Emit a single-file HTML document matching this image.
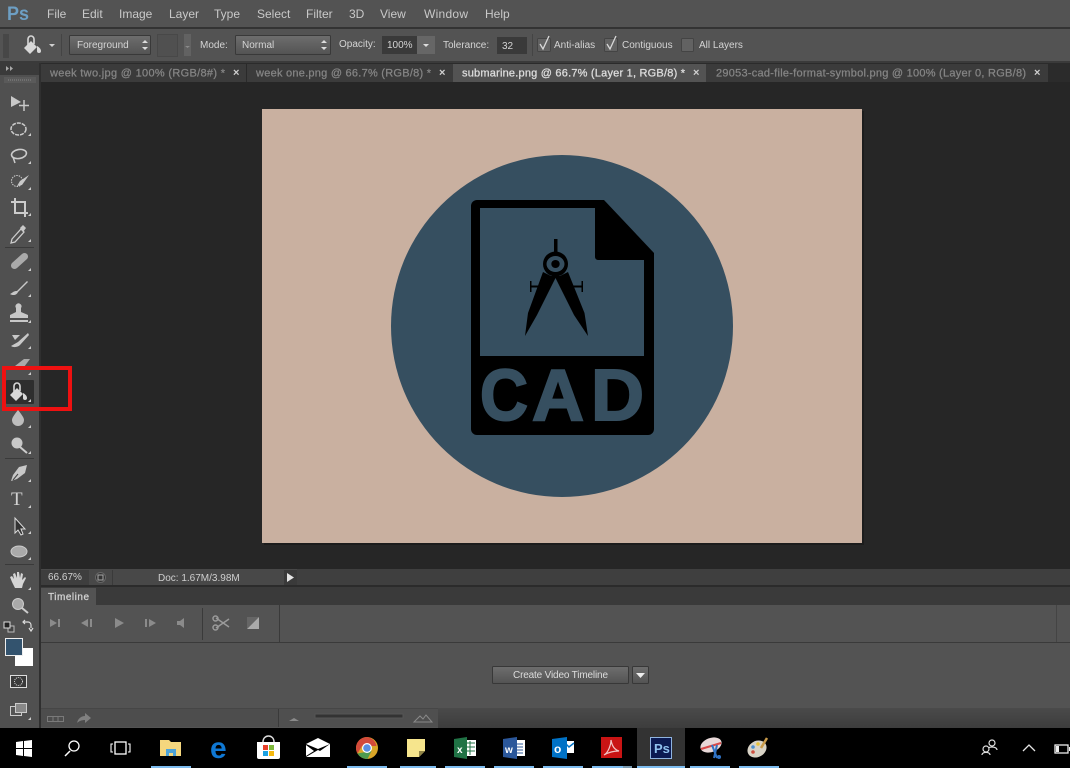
<!DOCTYPE html>
<html><head><meta charset="utf-8"><style>
html,body{margin:0;padding:0;background:#000;width:1070px;height:768px;overflow:hidden}
svg{display:block;font-family:"Liberation Sans",sans-serif}
.m{font-size:12px;fill:#c9c9c9}
.o{font-size:10px;fill:#d4d4d4}
.t{font-size:11px;fill:#858585;stroke:#858585;stroke-width:.25px}
.x{font-size:11px;fill:#d0d0d0;font-weight:bold}
.i{fill:#c8c8c8}
.c{fill:#8b8b8b}
</style></head><body>
<svg width="1070" height="768" viewBox="0 0 1070 768" xmlns="http://www.w3.org/2000/svg">
<defs>
<linearGradient id="dd" x1="0" y1="0" x2="0" y2="1"><stop offset="0" stop-color="#6e6e6e"/><stop offset="1" stop-color="#535353"/></linearGradient>
<linearGradient id="bot" x1="0" y1="0" x2="0" y2="1"><stop offset="0" stop-color="#4a4a4a"/><stop offset="1" stop-color="#3d3d3d"/></linearGradient>
</defs>
<!-- base -->
<rect width="1070" height="768" fill="#535353"/>
<rect x="0" y="27" width="1070" height="2" fill="#333"/>
<rect x="0" y="61" width="1070" height="2" fill="#3a3a3a"/>
<!-- menu -->
<text x="7" y="20" font-size="19" font-weight="bold" fill="#6d9fc4" textLength="22" lengthAdjust="spacingAndGlyphs">Ps</text>
<text class="m" x="47" y="18">File</text>
<text class="m" x="82" y="18">Edit</text>
<text class="m" x="119" y="18">Image</text>
<text class="m" x="169" y="18">Layer</text>
<text class="m" x="214" y="18">Type</text>
<text class="m" x="257" y="18">Select</text>
<text class="m" x="306" y="18">Filter</text>
<text class="m" x="349" y="18">3D</text>
<text class="m" x="380" y="18">View</text>
<text class="m" x="424" y="18" textLength="44">Window</text>
<text class="m" x="485" y="18">Help</text>
<!-- options -->
<path d="M3 34h6v24H3z" fill="#474747"/>
<path d="M31 41L24 48 30 54 37 47z" fill="#d8d8d8"/>
<path d="M28 45V39a3 3 0 0 1 6 0V44" fill="none" stroke="#d8d8d8" stroke-width="1.600"/>
<path d="M37 46c2 1 4 3 4 5a2 2 0 0 1-4 0z" fill="#d8d8d8"/>
<path d="M49 44h6l-3 3z" fill="#d0d0d0"/>
<rect x="61" y="34" width="1" height="22" fill="#444"/>
<rect x="69.500" y="35.500" width="81" height="19" rx="1" fill="url(#dd)" stroke="#393939"/>
<text class="o" x="77" y="48">Foreground</text>
<path d="M142 43l3-3 3 3zM142 47l3 3 3-3z" fill="#ddd"/>
<rect x="157.500" y="34.500" width="20" height="22" fill="#505050" stroke="#484848"/>
<rect x="184" y="34" width="7" height="22" fill="#626262"/>
<path d="M185 46h5l-2.500 2z" fill="#8a8a8a"/>
<text class="o" x="200" y="48">Mode:</text>
<rect x="235.500" y="35.500" width="95" height="19" rx="1" fill="url(#dd)" stroke="#393939"/>
<text class="o" x="242" y="48">Normal</text>
<path d="M321 43l3-3 3 3zM321 47l3 3 3-3z" fill="#ddd"/>
<text class="o" x="339" y="47">Opacity:</text>
<rect x="382" y="36" width="35" height="18" fill="#3a3a3a"/>
<text class="o" x="387" y="48">100%</text>
<rect x="417" y="36" width="18" height="18" fill="#666"/>
<path d="M423 44h6l-3 3z" fill="#ddd"/>
<text class="o" x="443" y="48">Tolerance:</text>
<rect x="497" y="37" width="30" height="17" fill="#3a3a3a"/>
<text class="o" x="502" y="49">32</text>
<rect x="532" y="34" width="1" height="22" fill="#444"/>
<rect x="537.500" y="38.500" width="13" height="13" rx="1" fill="#626262" stroke="#444"/>
<path d="M540 44l3 5 6-13" fill="none" stroke="#d8d8d8" stroke-width="1.300"/>
<text class="o" x="554" y="48">Anti-alias</text>
<rect x="604.500" y="38.500" width="13" height="13" rx="1" fill="#626262" stroke="#444"/>
<path d="M607 44l3 5 6-13" fill="none" stroke="#d8d8d8" stroke-width="1.300"/>
<text class="o" x="622" y="48">Contiguous</text>
<rect x="681.500" y="38.500" width="12" height="13" rx="1" fill="#626262" stroke="#444"/>
<text class="o" x="699" y="48">All Layers</text>
<!-- document area -->
<rect x="40" y="63" width="1030" height="507" fill="#262626"/>
<!-- tabs -->
<rect x="40" y="63" width="1030" height="19" fill="#2b2b2b"/>
<rect x="40" y="64" width="1008" height="18" fill="#3b3b3b"/>
<text class="t" x="50" y="76.500" textLength="175">week two.jpg @ 100% (RGB/8#) *</text>
<text class="x" x="233" y="76">×</text>
<rect x="246" y="64" width="1" height="18" fill="#2a2a2a"/>
<text class="t" x="256" y="76.500" textLength="175">week one.png @ 66.7% (RGB/8) *</text>
<text class="x" x="439" y="76">×</text>
<rect x="453" y="64" width="253" height="18" fill="#535353"/>
<text x="462" y="76.500" font-size="11" fill="#dcdcdc" stroke="#dcdcdc" stroke-width=".3" textLength="223">submarine.png @ 66.7% (Layer 1, RGB/8) *</text>
<text class="x" x="693" y="76">×</text>
<text class="t" x="716" y="76.500" textLength="310">29053-cad-file-format-symbol.png @ 100% (Layer 0, RGB/8)</text>
<text class="x" x="1034" y="76">×</text>
<rect x="1048" y="64" width="22" height="18" fill="#2b2b2b"/>
<!-- canvas -->
<rect x="264" y="111" width="600" height="434" fill="#1c1c1c"/>
<rect x="262" y="109" width="600" height="434" fill="#c9b0a0"/>
<circle cx="562" cy="326" r="171" fill="#364f60"/>
<path d="M477 200H604L654 253V429a6 6 0 0 1-6 6H477a6 6 0 0 1-6-6V206a6 6 0 0 1 6-6z" fill="#000"/>
<path d="M480 208H595V257a3 3 0 0 0 3 3H644V356H480z" fill="#364f60"/>
<g font-size="72" font-weight="bold" fill="#364f60" stroke="#364f60" stroke-width="2">
<text x="480" y="420" textLength="48" lengthAdjust="spacingAndGlyphs">C</text>
<text x="532" y="420" textLength="52" lengthAdjust="spacingAndGlyphs">A</text>
<text x="591" y="420" textLength="53" lengthAdjust="spacingAndGlyphs">D</text>
</g>
<!-- compass -->
<rect x="554" y="239" width="3.500" height="17" fill="#000"/>
<ellipse cx="555.500" cy="264" rx="12.500" ry="12.500" fill="#000"/>
<ellipse cx="555.500" cy="264" rx="9" ry="8" fill="#364f60"/>
<ellipse cx="555.500" cy="264" rx="4.200" ry="4" fill="#000"/>
<path d="M543 272L528 313 525 336 537 315 555.500 278 574 315 588 336 584.500 313 568 272 560 276H551z" fill="#000"/>
<path d="M530 281v11h1.500v-4.500H540v-2h-8.500V281zM583 281v11h-1.500v-4.500H572v-2h9.500V281z" fill="#000"/>
<!-- toolbar -->
<rect x="0" y="63" width="39" height="665" fill="#505050"/>
<rect x="39" y="63" width="2" height="665" fill="#2f2f2f"/>
<rect x="0" y="63" width="39" height="12" fill="#3a3a3a"/>
<path d="M6 66l3 2.500-3 2.500zM10 66l3 2.500-3 2.500z" fill="#aaa"/>
<rect x="4" y="77" width="32" height="6" fill="#5a5a5a"/>
<path d="M8 80h24" stroke="#888" stroke-dasharray="1 1"/>
<rect x="5" y="247" width="29" height="1" fill="#3a3a3a"/>
<rect x="5" y="458" width="29" height="1" fill="#3a3a3a"/>
<!-- move -->
<path d="M11 96l10 6-10 5z" class="i"/>
<path d="M24 100v11M19 105.500h10" stroke="#c8c8c8" stroke-width="1.500" fill="none"/>
<!-- marquee -->
<ellipse cx="18.500" cy="129" rx="7.500" ry="6" fill="none" stroke="#ccc" stroke-width="1.500" stroke-dasharray="4 1"/>
<path d="M28 136h3v-3z" fill="#ccc"/>
<!-- lasso -->
<ellipse cx="19" cy="154" rx="7.500" ry="4.500" fill="none" stroke="#ccc" stroke-width="1.600" transform="rotate(-10 19 154)"/>
<path d="M13 157l2 6" stroke="#ccc" stroke-width="1.500"/>
<path d="M28 164h3v-3z" fill="#ccc"/>
<!-- quick select -->
<circle cx="17" cy="181" r="5.500" fill="none" stroke="#ccc" stroke-dasharray="1.500 1"/>
<path d="M29 175l-9 6-3 5 5-1z" class="i"/>
<path d="M28 190h3v-3z" fill="#ccc"/>
<!-- crop -->
<path d="M15 198v15h13M11 202h14v15" fill="none" stroke="#ccc" stroke-width="2"/>
<path d="M28 216h3v-3z" fill="#ccc"/>
<!-- eyedropper -->
<path d="M12 239l9-10 3 3-9 10-4 1z" fill="none" stroke="#ccc" stroke-width="1.300"/>
<path d="M20 228l3-3 3 3-3 4z" class="i"/>
<path d="M28 242h3v-3z" fill="#ccc"/>
<!-- healing -->
<path d="M12 263l10-9a3 3 0 0 1 5 5l-10 9a3 3 0 0 1-5-5z" fill="#aaa"/>
<path d="M28 271h3v-3z" fill="#ccc"/>
<!-- brush -->
<path d="M27 281l-10 10-1 0c-2 0-4 2-6 3 3 2 7 1 8-2l10-10z" class="i"/>
<path d="M28 297h3v-3z" fill="#ccc"/>
<!-- stamp -->
<path d="M16 308a3 3 0 1 1 5 0v4l7 3v3H10v-3l6-3zM10 320h18v2H10z" class="i"/>
<path d="M28 323h3v-3z" fill="#ccc"/>
<!-- history brush -->
<path d="M28 333l-10 9-7 4c3 2 7 1 9-1l9-10zM12 335h8l-5 5" class="i"/>
<path d="M28 349h3v-3z" fill="#ccc"/>
<!-- eraser -->
<path d="M15 366l9-7h6l-6 8H14z" fill="#aaa"/>
<path d="M12 368h14v2H12z" class="i"/>
<path d="M28 375h3v-3z" fill="#ccc"/>
<!-- active bucket -->
<rect x="6" y="380" width="28" height="24" rx="1" fill="#2e2e2e"/>
<g transform="translate(-14 347)">
<path d="M31 41L24 48 30 54 37 47z" fill="#d8d8d8"/>
<path d="M28 45V39a3 3 0 0 1 6 0V44" fill="none" stroke="#d8d8d8" stroke-width="1.600"/>
<path d="M37 46c2 1 4 3 4 5a2 2 0 0 1-4 0z" fill="#d8d8d8"/>
</g>
<path d="M28 402h3v-3z" fill="#ccc"/>
<rect x="4" y="368" width="66" height="41" fill="none" stroke="#ee1111" stroke-width="4"/>
<!-- blur -->
<path d="M18 410c4 5 6 8 6 10a6 6 0 0 1-12 0c0-2 2-5 6-10z" fill="#bdbdbd"/>
<path d="M28 428h3v-3z" fill="#ccc"/>
<!-- dodge -->
<circle cx="17" cy="443" r="5.500" class="i"/>
<path d="M20 447l7 6" stroke="#ccc" stroke-width="2"/>
<path d="M28 454h3v-3z" fill="#ccc"/>
<!-- pen -->
<path d="M27 465l-8 2-6 8-2 6 6-2 8-6z" class="i"/>
<path d="M13 480l5-6" stroke="#444"/>
<path d="M28 482h3v-3z" fill="#ccc"/>
<!-- type -->
<text x="11" y="505" font-family="Liberation Serif,serif" font-size="19" fill="#d2d2d2">T</text>
<path d="M28 508h3v-3z" fill="#ccc"/>
<!-- path select -->
<path d="M15 518v15l3-3 3 5 2-1-2-5h4z" fill="#333" stroke="#ddd"/>
<path d="M28 534h3v-3z" fill="#ccc"/>
<!-- shape -->
<ellipse cx="19" cy="551.500" rx="8" ry="5.500" fill="#aaa" stroke="#ccc"/>
<path d="M28 560h3v-3z" fill="#ccc"/>
<rect x="5" y="564" width="29" height="1" fill="#3a3a3a"/>
<!-- hand -->
<path d="M12 582l-2-5 2-1 2 3-1-5 2-1 2 5v-6h2l1 6 1-5 2 1-1 6 3-3 1 1-3 6-1 4h-7z" fill="#d4d4d4"/>
<path d="M28 590h3v-3z" fill="#ccc"/>
<!-- zoom -->
<circle cx="18" cy="604" r="5.500" fill="#aaa" stroke="#ccc"/>
<path d="M22 608l6 5" stroke="#ccc" stroke-width="2"/>
<!-- default / switch -->
<rect x="8" y="626" width="6" height="6" fill="#444" stroke="#bbb"/>
<rect x="4" y="622" width="6" height="6" fill="#222" stroke="#ddd"/>
<path d="M24 622h4a3 3 0 0 1 3 3v3M29 628l2 3 2-3M25 620l-2 2 2 2" fill="none" stroke="#ddd" stroke-width="1.200"/>
<!-- colors -->
<rect x="15" y="648" width="18" height="18" fill="#fff"/>
<rect x="5.500" y="638.500" width="17" height="17" fill="#33536e" stroke="#eee"/>
<!-- quick mask -->
<rect x="10.500" y="675.500" width="16" height="12" fill="#3a3a3a" stroke="#ddd"/>
<circle cx="18.500" cy="681.500" r="4" fill="none" stroke="#ddd" stroke-dasharray="1 1"/>
<!-- screen mode -->
<rect x="10.500" y="706.500" width="11" height="9" fill="#555" stroke="#ccc"/>
<rect x="15.500" y="703.500" width="11" height="9" fill="#888" stroke="#ccc"/>
<path d="M28 720h3v-3z" fill="#ccc"/>
<!-- status -->
<rect x="41" y="569" width="1029" height="17" fill="#484848"/>
<rect x="41" y="570" width="48" height="15" fill="#3e3e3e"/>
<text x="48" y="580" font-size="10" fill="#d0d0d0">66.67%</text>
<rect x="112" y="570" width="1" height="15" fill="#3a3a3a"/>
<circle cx="100.500" cy="577.500" r="5" fill="#333" stroke="#666"/>
<rect x="98" y="575" width="5" height="5" fill="none" stroke="#aaa"/>
<text x="158" y="581" font-size="10" fill="#cfcfcf">Doc: 1.67M/3.98M</text>
<rect x="284" y="570" width="13" height="15" fill="#3a3a3a"/>
<path d="M287 573l7 4.500-7 4.500z" fill="#e6e6e6"/>
<rect x="297" y="569" width="773" height="17" fill="#3f3f3f"/>
<rect x="41" y="585" width="1029" height="2" fill="#2b2b2b"/>
<!-- timeline -->
<rect x="41" y="587" width="1029" height="18" fill="#3a3a3a"/>
<rect x="41" y="588" width="55" height="17" fill="#535353"/>
<text x="48" y="600" font-size="10" fill="#d5d5d5" stroke="#d5d5d5" stroke-width=".25" textLength="41">Timeline</text>
<rect x="41" y="605" width="1029" height="37" fill="#535353"/>
<rect x="41" y="642" width="1029" height="1" fill="#3a3a3a"/>
<path d="M50 619l7 4-7 4zM58 619h2v8h-2z" class="c"/>
<path d="M88 619l-7 4 7 4zM90 619h2v8h-2z" class="c"/>
<path d="M115 618l9 5-9 5z" class="c"/>
<path d="M145 619h2v8h-2zM149 619l7 4-7 4z" class="c"/>
<path d="M177 621h3l4-3v10l-4-3h-3z" class="c"/>
<rect x="202" y="608" width="1" height="32" fill="#3a3a3a"/>
<path d="M216 618l13 9M216 628l13-9" stroke="#9a9a9a" stroke-width="1.500"/>
<circle cx="215.500" cy="618.500" r="2.500" fill="none" stroke="#9a9a9a" stroke-width="1.500"/>
<circle cx="215.500" cy="627.500" r="2.500" fill="none" stroke="#9a9a9a" stroke-width="1.500"/>
<rect x="247" y="617" width="12" height="12" fill="#777"/>
<path d="M247 629L259 617V629z" fill="#aaa"/>
<path d="M247 629L259 617H247z" fill="#666"/>
<rect x="279" y="605" width="1" height="37" fill="#3a3a3a"/>
<rect x="1056" y="605" width="1" height="37" fill="#444"/>
<!-- create button -->
<rect x="492.500" y="666.500" width="136" height="17" rx="1" fill="url(#dd)" stroke="#383838"/>
<text x="513" y="678" font-size="10" fill="#dcdcdc" textLength="95">Create Video Timeline</text>
<rect x="632.500" y="666.500" width="16" height="17" rx="1" fill="url(#dd)" stroke="#383838"/>
<path d="M636 673h9l-4.500 5z" fill="#eee"/>
<!-- bottom strip -->
<rect x="41" y="708" width="1029" height="1" fill="#464646"/>
<rect x="438" y="708" width="632" height="20" fill="url(#bot)"/>
<rect x="41" y="709" width="237" height="18" fill="#4d4d4d"/>
<rect x="278" y="709" width="1" height="18" fill="#3a3a3a"/>
<rect x="279" y="709" width="159" height="18" fill="#4f4f4f"/>
<rect x="47.500" y="716.500" width="16" height="5" fill="none" stroke="#7a7a7a"/>
<path d="M53 716v5M58 716v5" stroke="#7a7a7a"/>
<path d="M77 723c1-5 5-7 8-7v-3l6 5-6 5v-3c-3 0-6 1-8 3z" fill="#808080"/>
<path d="M289 721l5-3 5 3z" fill="#8a8a8a"/>
<rect x="315" y="714" width="88" height="4" fill="#333" stroke="#555"/>
<path d="M414 722l6-6 3 3 3-4 6 7z" fill="none" stroke="#8a8a8a"/>
<!-- taskbar -->
<rect x="0" y="728" width="1070" height="40" fill="#000"/>
<rect x="637" y="728" width="48" height="40" fill="#333"/>
<g fill="#7dbcef">
<rect x="151" y="766" width="40" height="2"/><rect x="347" y="766" width="40" height="2"/>
<rect x="400" y="766" width="36" height="2"/><rect x="445" y="766" width="40" height="2"/>
<rect x="494" y="766" width="40" height="2"/><rect x="543" y="766" width="40" height="2"/>
<rect x="592" y="766" width="31" height="2"/><rect x="637" y="766" width="48" height="2"/>
<rect x="690" y="766" width="40" height="2"/><rect x="739" y="766" width="40" height="2"/>
</g>
<rect x="623" y="766" width="9" height="2" fill="#7a9ab0"/>
<!-- windows -->
<path d="M16 742l7-1v7h-7zM24 741l8-1v8h-8zM16 749h7v7l-7-1zM24 749h8v8l-8-1z" fill="#fff"/>
<!-- search -->
<circle cx="74" cy="746" r="5" fill="none" stroke="#fff" stroke-width="1.300"/>
<path d="M70 751l-5 5" stroke="#fff" stroke-width="1.500"/>
<!-- task view -->
<rect x="115" y="742" width="11" height="12" fill="none" stroke="#fff" stroke-width="1.300"/>
<path d="M113 744h-2v8h2M128 744h2v8h-2" fill="none" stroke="#fff" stroke-width="1.100"/>
<!-- folder -->
<path d="M160 740h9l2 2h10v14h-21z" fill="#f5d77e"/>
<path d="M166 749h10v7h-3v-3h-4v3h-3z" fill="#4da3d8"/>
<!-- edge -->
<text x="210" y="758" font-size="30" font-weight="bold" fill="#0f78d4">e</text>
<!-- store -->
<path d="M257 742h23v15a2 2 0 0 1-2 2h-19a2 2 0 0 1-2-2z" fill="#fff"/>
<path d="M263 742c0-8 11-8 11 0" fill="none" stroke="#ddd" stroke-width="1.500"/>
<rect x="263" y="745" width="5" height="5" fill="#e8402a"/><rect x="269" y="745" width="5" height="5" fill="#7db83a"/>
<rect x="263" y="751" width="5" height="5" fill="#1ba1e2"/><rect x="269" y="751" width="5" height="5" fill="#f6b90e"/>
<!-- mail -->
<path d="M306 744l12-6 12 6-12 5z" fill="#fff"/>
<path d="M306 745l8 6-8 5z M306 757l12-7 2 1 10-7v13z" fill="#fff"/>
<!-- chrome -->
<circle cx="367" cy="748" r="11" fill="#d9a527"/>
<path d="M367 737a11 11 0 0 0-9.500 16.500L362 746h14.500a11 11 0 0 0-9.500-9z" fill="#d34a3a"/>
<path d="M357.500 753.500a11 11 0 0 0 10 5.500l4-8z" fill="#4d9a4e"/>
<circle cx="367" cy="748" r="5" fill="#fff"/><circle cx="367" cy="748" r="3.800" fill="#5b8fe0"/>
<!-- sticky -->
<path d="M407 739h18v12l-6 6h-12z" fill="#f6e58d"/>
<path d="M425 751h-6v6z" fill="#8f8346"/>
<!-- excel -->
<rect x="462" y="740" width="14" height="16" fill="#fff"/>
<path d="M466 743h9M466 747h9M466 751h9M470 741v14" stroke="#207245"/>
<path d="M454 739l13-2v22l-13-2z" fill="#207245"/>
<text x="457" y="753" font-size="10" font-weight="bold" fill="#fff">x</text>
<!-- word -->
<rect x="512" y="740" width="13" height="16" fill="#fff"/>
<path d="M515 744h8M515 747h8M515 750h8M515 753h8" stroke="#2b579a"/>
<path d="M503 739l14-2v22l-14-2z" fill="#2b579a"/>
<text x="505" y="753" font-size="10" font-weight="bold" fill="#fff">w</text>
<!-- outlook -->
<rect x="565" y="741" width="9" height="12" fill="#fff"/>
<path d="M566 744l3 3 5-4" fill="none" stroke="#0072c6" stroke-width="1.500"/>
<path d="M552 739l15-2v22l-15-2z" fill="#0072c6"/>
<text x="554" y="753" font-size="12" font-weight="bold" fill="#fff">o</text>
<!-- acrobat -->
<rect x="601" y="737" width="21" height="21" fill="#c91414"/>
<path d="M604 755c4-2 7-10 7-15 1 6 4 10 8 11-5 0-10 1-15 4z" fill="none" stroke="#f2c5c5" stroke-width="1.200"/>
<!-- ps -->
<rect x="650.500" y="737.500" width="21" height="21" fill="#0b1a52" stroke="#8fb4e0"/>
<text x="654" y="753" font-size="13" font-weight="bold" fill="#8fc1ee">Ps</text>
<!-- snipping -->
<ellipse cx="711" cy="745" rx="11" ry="7" fill="#e8d8d8" transform="rotate(-20 711 745)"/>
<path d="M701 749l20-6" stroke="#d84a4a" stroke-width="2"/>
<path d="M712 745l5 13M717 745l-3 13" stroke="#2f72c4" stroke-width="2"/>
<circle cx="719" cy="757" r="2" fill="#2f72c4"/>
<!-- paint -->
<ellipse cx="757" cy="749" rx="10" ry="8" fill="#d8d3c6" transform="rotate(-30 757 749)"/>
<circle cx="753" cy="747" r="1.800" fill="#4a8fd0"/><circle cx="758" cy="744" r="1.800" fill="#e8c33a"/><circle cx="753" cy="752" r="1.800" fill="#d05040"/>
<path d="M761 748l6-10" stroke="#c99b4a" stroke-width="2.500"/>
<!-- tray -->
<circle cx="992" cy="743" r="3" fill="none" stroke="#e0e0e0" stroke-width="1.200"/>
<path d="M987 751c0-4 10-4 10 0" fill="none" stroke="#e0e0e0" stroke-width="1.200" transform="translate(0 -1)"/>
<circle cx="986" cy="749" r="3" fill="#000" stroke="#e0e0e0" stroke-width="1.200"/>
<path d="M982 755c0-3.500 8-3.500 8 0" fill="none" stroke="#e0e0e0" stroke-width="1.200"/>
<path d="M1023 751l6-6 6 6" fill="none" stroke="#e6e6e6" stroke-width="1.300"/>
<rect x="1055" y="745" width="13" height="8" fill="none" stroke="#eee" stroke-width="1.300"/>
<rect x="1056" y="746" width="3" height="6" fill="#eee"/>
<rect x="1069" y="747" width="1" height="4" fill="#eee"/>
</svg>
</body></html>
